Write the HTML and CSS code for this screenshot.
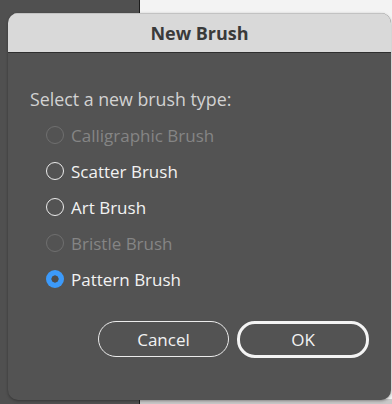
FILE: index.html
```html
<!DOCTYPE html>
<html lang="en">
<head>
<meta charset="utf-8">
<title>New Brush</title>
<link rel="stylesheet" href="styles.css">
</head>
<body>
<div class="backdrop">
  <div class="sidebar"></div>
  <div class="divider"></div>
  <div class="canvas">
    <div class="canvas-top"></div>
    <div class="canvas-bottom"></div>
  </div>
</div>

<div class="dialog">
  <div class="titlebar">New Brush</div>
  <div class="content">
    <div class="prompt">Select a new brush type:</div>
    <div class="options">
      <div class="option disabled"><span class="radio"></span><span class="label">Calligraphic Brush</span></div>
      <div class="option"><span class="radio"></span><span class="label">Scatter Brush</span></div>
      <div class="option"><span class="radio"></span><span class="label">Art Brush</span></div>
      <div class="option disabled"><span class="radio"></span><span class="label">Bristle Brush</span></div>
      <div class="option"><span class="radio checked"></span><span class="label">Pattern Brush</span></div>
    </div>
    <div class="buttons">
      <button class="btn">Cancel</button>
      <button class="btn default">OK</button>
    </div>
  </div>
</div>
</body>
</html>
```

FILE: styles.css
```css
html, body {
  margin: 0;
  padding: 0;
  width: 392px;
  height: 404px;
  overflow: hidden;
  font-family: "Open Sans", "Noto Sans", sans-serif;
}

.backdrop {
  display: flex;
  height: 404px;
}

.sidebar {
  width: 139px;
  background: #505050;
}

.divider {
  width: 1px;
  background: #1c1c1c;
}

.canvas {
  flex: 1;
  display: flex;
  flex-direction: column;
}

.canvas-top {
  flex: 1;
  background: #f3f3f3;
}

.canvas-bottom {
  height: 5px;
  background: #c8c8c8;
}

.dialog {
  position: absolute;
  left: 8px;
  top: 13px;
  width: 383px;
  height: 387px;
  border-radius: 10px;
  overflow: hidden;
  background: #535353;
  box-shadow: 0 1px 3px rgba(0, 0, 0, 0.35);
}

.titlebar {
  box-sizing: border-box;
  border-top: 1px solid #c2c2c2;
  border-bottom: 1px solid #2e2e2e;
  height: 40px;
  background: #d9d9d9;
  color: #3a3a3a;
  font-weight: 700;
  font-size: 18px;
  display: flex;
  align-items: center;
  justify-content: center;
}

.content {
  padding: 35px 22px 0 22px;
}

.prompt {
  font-size: 17.8px;
  line-height: 22px;
  color: #d2d2d2;
}

.options {
  margin-top: 7px;
  padding-left: 16px;
}

.option {
  display: flex;
  align-items: center;
  height: 36px;
  gap: 7px;
  font-size: 17px;
  color: #f2f2f2;
}

.option.disabled {
  color: #858585;
}

.radio {
  width: 18px;
  height: 18px;
  box-sizing: border-box;
  border-radius: 50%;
  border: 1.5px solid #ececec;
  flex: none;
}

.option.disabled .radio {
  border-color: #6f6f6f;
}

.radio.checked {
  border: none;
  background: radial-gradient(circle, #4d4d4d 0 3.3px, #3c9afa 3.9px);
}

.buttons {
  display: flex;
  justify-content: flex-end;
  gap: 8px;
  margin-top: 24px;
}

.btn {
  width: 131px;
  height: 36px;
  box-sizing: border-box;
  border-radius: 18px;
  border: 1.5px solid #ececec;
  background: transparent;
  color: #f2f2f2;
  font-family: "Open Sans", "Noto Sans", sans-serif;
  font-size: 17px;
  padding: 0;
}

.btn.default {
  border: 3px solid #f4f4f4;
  width: 132px;
  height: 37px;
}
```
